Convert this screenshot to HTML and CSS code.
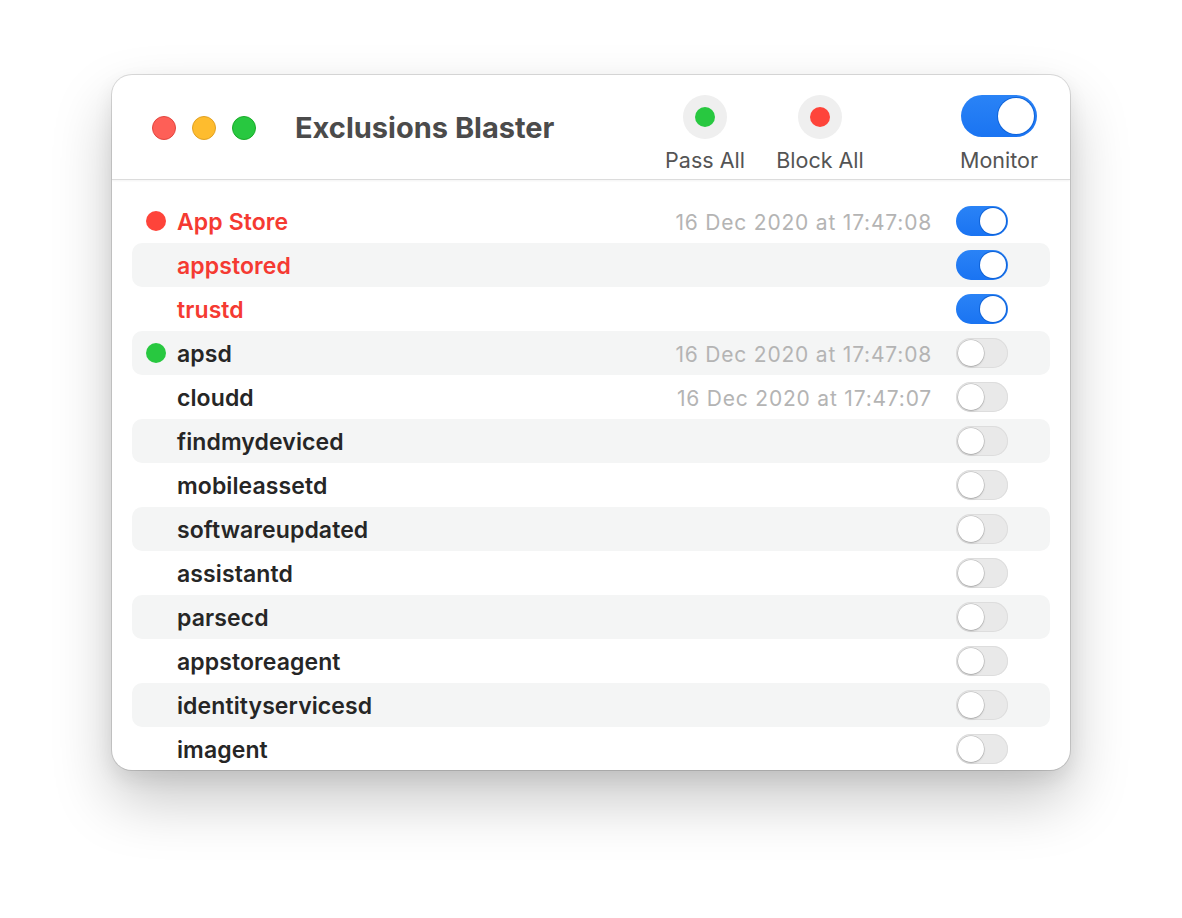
FILE: index.html
```html
<!DOCTYPE html>
<html>
<head>
<meta charset="utf-8">
<link rel="stylesheet" href="styles.css">
</head>
<body>
<div class="stage">
  <div class="window">
    <div class="header">
      <div class="lights">
        <span class="light red"></span>
        <span class="light yellow"></span>
        <span class="light green"></span>
      </div>
      <div class="title">Exclusions Blaster</div>
      <div class="actions">
        <div class="action pass">
          <div class="btn"><span class="dot green-dot"></span></div>
          <div class="label">Pass All</div>
        </div>
        <div class="action block">
          <div class="btn"><span class="dot red-dot"></span></div>
          <div class="label">Block All</div>
        </div>
        <div class="action monitor">
          <div class="toggle big on"><span class="knob"></span></div>
          <div class="label">Monitor</div>
        </div>
      </div>
    </div>
    <div class="list">
      <div class="row blocked"><span class="status red-dot"></span><span class="name">App Store</span><span class="date">16 Dec 2020 at 17:47:08</span><span class="toggle on"><span class="knob"></span></span></div>
      <div class="row blocked alt"><span class="status"></span><span class="name">appstored</span><span class="date"></span><span class="toggle on"><span class="knob"></span></span></div>
      <div class="row blocked"><span class="status"></span><span class="name">trustd</span><span class="date"></span><span class="toggle on"><span class="knob"></span></span></div>
      <div class="row alt"><span class="status green-dot"></span><span class="name">apsd</span><span class="date">16 Dec 2020 at 17:47:08</span><span class="toggle"><span class="knob"></span></span></div>
      <div class="row"><span class="status"></span><span class="name">cloudd</span><span class="date">16 Dec 2020 at 17:47:07</span><span class="toggle"><span class="knob"></span></span></div>
      <div class="row alt"><span class="status"></span><span class="name">findmydeviced</span><span class="date"></span><span class="toggle"><span class="knob"></span></span></div>
      <div class="row"><span class="status"></span><span class="name">mobileassetd</span><span class="date"></span><span class="toggle"><span class="knob"></span></span></div>
      <div class="row alt"><span class="status"></span><span class="name">softwareupdated</span><span class="date"></span><span class="toggle"><span class="knob"></span></span></div>
      <div class="row"><span class="status"></span><span class="name">assistantd</span><span class="date"></span><span class="toggle"><span class="knob"></span></span></div>
      <div class="row alt"><span class="status"></span><span class="name">parsecd</span><span class="date"></span><span class="toggle"><span class="knob"></span></span></div>
      <div class="row"><span class="status"></span><span class="name">appstoreagent</span><span class="date"></span><span class="toggle"><span class="knob"></span></span></div>
      <div class="row alt"><span class="status"></span><span class="name">identityservicesd</span><span class="date"></span><span class="toggle"><span class="knob"></span></span></div>
      <div class="row"><span class="status"></span><span class="name">imagent</span><span class="date"></span><span class="toggle"><span class="knob"></span></span></div>
    </div>
  </div>
</div>
</body>
</html>
```
FILE: styles.css
```css
html, body {
  margin: 0;
  padding: 0;
  background: #ffffff;
}
body {
  font-family: Inter, "Liberation Sans", sans-serif;
  width: 1182px;
  height: 918px;
  overflow: hidden;
}
.stage {
  padding: 75px 0 0 112px;
}
.window {
  width: 958px;
  height: 695px;
  background: #ffffff;
  border-radius: 20px;
  box-shadow: 0 0 0 1px rgba(0,0,0,0.13), 0 30px 60px rgba(0,0,0,0.22), 0 8px 20px rgba(0,0,0,0.08);
  overflow: hidden;
  box-sizing: border-box;
}
.header {
  height: 105px;
  border-bottom: 1px solid #dcdcdc;
  box-shadow: 0 1px 2px rgba(0,0,0,0.05);
  display: flex;
  align-items: flex-start;
  box-sizing: border-box;
}
.lights {
  display: flex;
  gap: 16px;
  padding: 41px 0 0 40px;
}
.light {
  width: 24px;
  height: 24px;
  border-radius: 50%;
  box-sizing: border-box;
}
.light.red { background: #fe5f57; border: 1px solid #e2463f; }
.light.yellow { background: #febc2e; border: 1px solid #e1a123; }
.light.green { background: #28c840; border: 1px solid #1aab29; }
.title {
  margin-left: 39px;
  padding-top: 35px;
  font-size: 29px;
  font-weight: 700;
  color: #4b4b4b;
  letter-spacing: 0;
}
.actions {
  margin-left: auto;
  display: flex;
  align-items: flex-start;
  padding-top: 20px;
  padding-right: 26px;
}
.action {
  display: flex;
  flex-direction: column;
  align-items: center;
}
.action.pass { width: 90px; }
.action.block { width: 100px; margin-left: 20px; }
.action.monitor { width: 90px; margin-left: 84px; }
.btn {
  width: 44px;
  height: 44px;
  border-radius: 50%;
  background: #efefef;
  display: flex;
  align-items: center;
  justify-content: center;
}
.dot {
  width: 20px;
  height: 20px;
  border-radius: 50%;
}
.green-dot { background: #28c840; }
.red-dot { background: #fe443a; }
.label {
  margin-top: 9px;
  font-size: 21.5px;
  color: #545454;
  line-height: 24px;
  white-space: nowrap;
}
.monitor .label {
  margin-top: 11px;
}
.toggle {
  width: 52px;
  height: 30px;
  border-radius: 15px;
  background: #e9e9e9;
  box-shadow: inset 0 0 0 1px #dddddd;
  position: relative;
  flex: none;
  display: block;
}
.toggle .knob {
  position: absolute;
  top: 2px;
  left: 2px;
  width: 26px;
  height: 26px;
  border-radius: 50%;
  background: #ffffff;
  box-shadow: 0 0 0 0.5px rgba(0,0,0,0.2), 0 1px 2px rgba(0,0,0,0.2);
}
.toggle.on {
  background: linear-gradient(180deg, #2a83f6 0%, #1a74f2 100%);
  box-shadow: none;
}
.toggle.on .knob {
  left: auto;
  right: 2px;
  box-shadow: 0 0 0 1px #0f63d8;
}
.toggle.big {
  width: 76px;
  height: 42px;
  border-radius: 21px;
}
.toggle.big .knob {
  width: 36px;
  height: 36px;
  top: 3px;
  right: 3px;
}
.list {
  padding: 19px 20px 0 20px;
}
.row {
  height: 44px;
  display: flex;
  align-items: center;
  border-radius: 10px;
  font-size: 23px;
  font-weight: 600;
  color: #262626;
}
.row.alt {
  background: #f4f5f5;
}
.row.blocked .name {
  color: #f53a32;
}
.status {
  width: 20px;
  height: 20px;
  border-radius: 50%;
  margin-left: 14px;
  flex: none;
}
.name {
  margin-left: 11px;
  padding-top: 2px;
  letter-spacing: 0.1px;
}
.date {
  margin-left: auto;
  padding-top: 2px;
  font-size: 21px;
  font-weight: 400;
  color: #b4b4b4;
  letter-spacing: 0.8px;
  margin-right: 24px;
}
.row .toggle {
  margin-right: 42px;
}
```
